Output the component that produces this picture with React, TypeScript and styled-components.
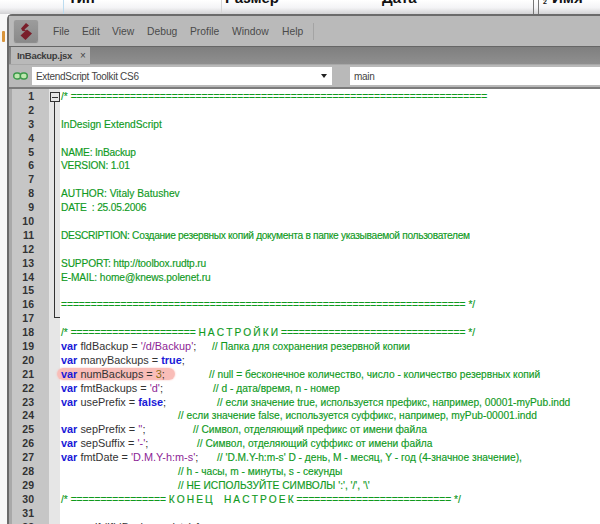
import React from 'react'
import styled, {createGlobalStyle} from 'styled-components'

const GlobalStyle = createGlobalStyle`
  html, body {
    margin: 0;
    background: #fff;
  }
`

const Page = styled.div`
  width: 600px;
  height: 524px;
  overflow: hidden;
  display: flex;
  flex-direction: column;
  font-family: 'Liberation Sans', sans-serif;
`

const ListHeader = styled.div`
  height: 14px;
  flex: none;
  display: grid;
  grid-template-columns: 64px 158px 157px 155px 5px 1fr;
  background: linear-gradient(#ffffff, #f4f4f6 55%, #d2d2d4);
  overflow: hidden;
`

const HeaderCell = styled.div<{$line?: string; $pad?: number}>`
  border-right: 1px solid ${p => p.$line || 'transparent'};
  padding-left: ${p => p.$pad || 0}px;
  font: bold 15px/15px 'Liberation Sans', sans-serif;
  color: #111;
  margin-top: -10px;
  height: 30px;
  white-space: nowrap;
`

const SortMark = styled.span`
  display: inline-block;
  width: 8px;
  margin-right: 3px;
  font-size: 7px;
  line-height: 7px;
  vertical-align: -1px;
  text-align: center;
  &::before {
    content: '';
    display: block;
    width: 3px;
    height: 4px;
    margin: 0 auto;
    background: #111;
  }
`

const Desk = styled.div`
  flex: 1;
  display: flex;
  min-height: 0;
`

const DeskEdge = styled.div`
  width: 7px;
  flex: none;
  padding-top: 17px;
  background: #f8f8f8;
`

const OrangeSpot = styled.div`
  width: 3px;
  height: 11px;
  margin-left: 2px;
  border-radius: 1px;
  background: #d9953c;
`

const Window = styled.div`
  flex: 1;
  display: flex;
  flex-direction: column;
  min-width: 0;
  background: #b9b9b9;
  border-top: 2px solid #6b6b6b;
  border-left: 2px solid #6b6b6b;
  border-top-left-radius: 5px;
`

const Toolbar = styled.div`
  height: 30px;
  flex: none;
  display: flex;
  align-items: center;
  padding-left: 5px;
  background: #bababa;
  border-bottom: 1px solid #666;
`

const LogoButton = styled.div`
  width: 24px;
  height: 22px;
  display: flex;
  align-items: center;
  justify-content: center;
  margin-right: 15px;
  border-radius: 2px;
  background: linear-gradient(#9c9c9c, #8a8a8a);
  box-shadow: 0 1px 1px #8a8a8a;
`

const MenuItem = styled.span<{$width: number}>`
  width: ${p => p.$width}px;
  flex: none;
  font-size: 10.3px;
  color: #4a4a4a;
`

const ToolbarDivider = styled.div`
  width: 1px;
  height: 17px;
  background: #a4a4a4;
`

const TabBar = styled.div`
  height: 17px;
  flex: none;
  display: flex;
  padding-left: 2px;
  background: linear-gradient(#7f7f7f, #8f8f8f);
  border-bottom: 1px solid #a8a8a8;
`

const Tab = styled.div`
  width: 79px;
  display: flex;
  align-items: center;
  gap: 8px;
  padding-left: 6px;
  box-sizing: border-box;
  background: #b9b9b9;
  font-size: 9.5px;
  font-weight: 700;
  letter-spacing: -0.3px;
  color: #3c3c3c;
`

const TabClose = styled.span`
  font-size: 10px;
  font-weight: 400;
  color: #444;
`

const TargetBar = styled.div`
  height: 22px;
  flex: none;
  display: flex;
  align-items: center;
  padding-left: 4px;
  background: #b9b9b9;
  border-bottom: 2px solid #7b7b7b;
`

const LinkIcon = styled.svg`
  width: 15px;
  height: 8px;
  flex: none;
  margin-right: 4px;
`

const Field = styled.div<{$width?: number}>`
  height: 18px;
  box-sizing: border-box;
  display: flex;
  align-items: center;
  justify-content: space-between;
  padding: 0 5px 0 4px;
  background: #fff;
  font-size: 10px;
  letter-spacing: -0.3px;
  color: #444;
  ${p => (p.$width ? `width: ${p.$width}px; flex: none; margin-right: 18px;` : 'flex: 1;')}
`

const Caret = styled.span`
  width: 0;
  height: 0;
  border-left: 3.5px solid transparent;
  border-right: 3.5px solid transparent;
  border-top: 4px solid #222;
`

const Editor = styled.div`
  flex: 1;
  display: flex;
  min-height: 0;
  padding-left: 3px;
  background: #a9a9a9;
`

const Gutter = styled.div`
  width: 37px;
  flex: none;
  padding-top: 1px;
  background: #c6c6c6;
`

const LineNumber = styled.div`
  height: 13.9px;
  line-height: 13.9px;
  padding-right: 15px;
  text-align: right;
  font-size: 10.5px;
  font-weight: 700;
  color: #333;
`

const FoldColumn = styled.div`
  width: 11px;
  flex: none;
  padding-top: 3px;
  background: #e6e6e6;
`

const FoldBox = styled.div`
  width: 8px;
  height: 8px;
  margin-left: 1px;
  display: flex;
  align-items: center;
  justify-content: center;
  background: #e6e6e6;
  border: 1px solid #333;
  &::before {
    content: '';
    width: 6px;
    height: 1px;
    background: #333;
  }
`

const FoldLine = styled.div`
  width: 5px;
  height: 215px;
  margin-left: 5px;
  border-left: 1px solid #333;
  border-bottom: 1px solid #333;
`

const Code = styled.div`
  flex: 1;
  min-width: 0;
  padding: 1px 0 0 1px;
  background: #fff;
  font-size: 10.2px;
`

const Line = styled.div`
  height: 13.9px;
  line-height: 13.9px;
  display: flex;
  white-space: pre;
  color: #333;
`

const Statement = styled.span<{$width?: number}>`
  ${p => (p.$width ? `width: ${p.$width}px;` : '')}
  flex: none;
  font-size: 10.9px;
`

const Keyword = styled.b`
  color: #1a1ad8;
`

const Str = styled.span`
  color: #8d1f96;
`

const Note = styled.span<{$tight?: number}>`
  color: #109a1e;
  letter-spacing: ${p => p.$tight || 0}px;
  -webkit-text-stroke: 0.15px #109a1e;
`

const Spaced = styled.span`
  word-spacing: -0.75px;
`

const Marker = styled.span`
  margin: 0 -4px;
  padding: 0 10px 0 4px;
  border-radius: 7px;
  background: #f9bdb8;
  box-shadow: 0 0 2px #f9bdb8;
`

const Num = styled.span`
  color: #8a6a10;
`

const bar = (n: number) => '='.repeat(n)

const Comment = ({text, at = 0, tight}: {text: string; at?: number; tight?: number}) => (
    <Line>
        {at > 0 && <Statement $width={at}/>}
        <Note $tight={tight}>{text}</Note>
    </Line>
)

const Assign = ({name, value, kind, at, note}: {
    name: string
    value: string
    kind: 'str' | 'bool'
    at: number
    note: string
}) => (
    <Line>
        <Statement $width={at}>
            <Keyword>var</Keyword> {name} = {kind === 'str' ? <Str>{value}</Str> : <Keyword>{value}</Keyword>};
        </Statement>
        <Note>{note}</Note>
    </Line>
)

const menu: [string, number][] = [
    ['File', 29],
    ['Edit', 30],
    ['View', 35],
    ['Debug', 43],
    ['Profile', 42],
    ['Window', 50],
    ['Help', 31],
]

const App = () => {
    const numbers = Array.from({length: 32}, (_, i) => i + 1)

    return (
        <React.Fragment>
            <GlobalStyle/>
            <Page>
                <ListHeader>
                    <HeaderCell $line="#bcdcf0"/>
                    <HeaderCell $line="#d6d6d6" $pad={4}>Тип</HeaderCell>
                    <HeaderCell $pad={3}>Размер</HeaderCell>
                    <HeaderCell $line="#777" $pad={3}>Дата</HeaderCell>
                    <HeaderCell $line="#777"/>
                    <HeaderCell $pad={2}><SortMark>2</SortMark>Имя</HeaderCell>
                </ListHeader>
                <Desk>
                    <DeskEdge><OrangeSpot/></DeskEdge>
                    <Window>
                        <Toolbar>
                            <LogoButton>
                                <svg width="14" height="17" viewBox="0 0 14 17">
                                    <path d="M7 0 L10 2.5 L5.5 6.5 L8 8.5 L3.5 8 L2 5.5 Z" fill="#7a1f2b"/>
                                    <path d="M8 6.5 L13 10.5 L6.5 17 L1.5 12.5 Z" fill="#7a1f2b"/>
                                </svg>
                            </LogoButton>
                            {menu.map(([label, width]) => (
                                <MenuItem key={label} $width={width}>{label}</MenuItem>
                            ))}
                            <ToolbarDivider/>
                        </Toolbar>
                        <TabBar>
                            <Tab>InBackup.jsx<TabClose>×</TabClose></Tab>
                        </TabBar>
                        <TargetBar>
                            <LinkIcon viewBox="0 0 15 8">
                                <rect x="0.7" y="1" width="7" height="6" rx="3" fill="#bfe8b0" stroke="#3c9a4a" strokeWidth="1.4"/>
                                <rect x="7.3" y="1" width="7" height="6" rx="3" fill="#bfe8b0" stroke="#3c9a4a" strokeWidth="1.4"/>
                            </LinkIcon>
                            <Field $width={300}>ExtendScript Toolkit CS6<Caret/></Field>
                            <Field>main</Field>
                        </TargetBar>
                        <Editor>
                            <Gutter>
                                {numbers.map(n => <LineNumber key={n}>{n}</LineNumber>)}
                            </Gutter>
                            <FoldColumn>
                                <FoldBox/>
                                <FoldLine/>
                            </FoldColumn>
                            <Code>
                                <Comment text={`/* ${bar(70)}`}/>
                                <Line/>
                                <Comment text="InDesign ExtendScript"/>
                                <Line/>
                                <Comment tight={-0.2} text="NAME: InBackup"/>
                                <Comment tight={-0.2} text="VERSION: 1.01"/>
                                <Line/>
                                <Comment text="AUTHOR: Vitaly Batushev"/>
                                <Comment tight={-0.2} text="DATE  : 25.05.2006"/>
                                <Line/>
                                <Comment tight={-0.32} text="DESCRIPTION: Создание резервных копий документа в папке указываемой пользователем"/>
                                <Line/>
                                <Comment tight={-0.15} text="SUPPORT: http://toolbox.rudtp.ru"/>
                                <Comment tight={-0.1} text="E-MAIL: home@knews.polenet.ru"/>
                                <Line/>
                                <Comment text={`${bar(68)} */`}/>
                                <Line/>
                                <Line>
                                    <Note>/* {bar(21)} <Spaced>Н А С Т Р О Й К И</Spaced> {bar(31)} */</Note>
                                </Line>
                                <Assign name="fldBackup" value="'/d/Backup'" kind="str" at={151} note="// Папка для сохранения резервной копии"/>
                                <Line>
                                    <Statement><Keyword>var</Keyword> manyBackups = <Keyword>true</Keyword>;</Statement>
                                </Line>
                                <Line>
                                    <Statement $width={148}>
                                        <Marker><Keyword>var</Keyword> numBackups = <Num>3</Num>;</Marker>
                                    </Statement>
                                    <Note>// null = бесконечное количество, число - количество резервных копий</Note>
                                </Line>
                                <Assign name="fmtBackups" value="'d'" kind="str" at={152} note="// d - дата/время, n - номер"/>
                                <Assign name="usePrefix" value="false" kind="bool" at={156} note="// если значение true, используется префикс, например, 00001-myPub.indd"/>
                                <Comment at={117} text="// если значение false, используется суффикс, например, myPub-00001.indd"/>
                                <Assign name="sepPrefix" value="''" kind="str" at={132} note="// Символ, отделяющий префикс от имени файла"/>
                                <Assign name="sepSuffix" value="'-'" kind="str" at={136} note="// Символ, отделяющий суффикс от имени файла"/>
                                <Assign name="fmtDate" value="'D.M.Y-h:m-s'" kind="str" at={156} note="// 'D.M.Y-h:m-s' D - день, M - месяц, Y - год (4-значное значение),"/>
                                <Comment at={117} text="// h - часы, m - минуты, s - секунды"/>
                                <Comment at={117} text="// НЕ ИСПОЛЬЗУЙТЕ СИМВОЛЫ ':', '/', '\'"/>
                                <Line>
                                    <Note>/* {bar(16)} <Spaced>К О Н Е Ц</Spaced>{'    '}<Spaced>Н А С Т Р О Е К</Spaced> {bar(26)} */</Note>
                                </Line>
                                <Line/>
                                <Line>
                                    <Statement $width={34}/>
                                    <Statement>if (!fldBackup.exists) {'{'}</Statement>
                                </Line>
                            </Code>
                        </Editor>
                    </Window>
                </Desk>
            </Page>
        </React.Fragment>
    )
}

export default App
